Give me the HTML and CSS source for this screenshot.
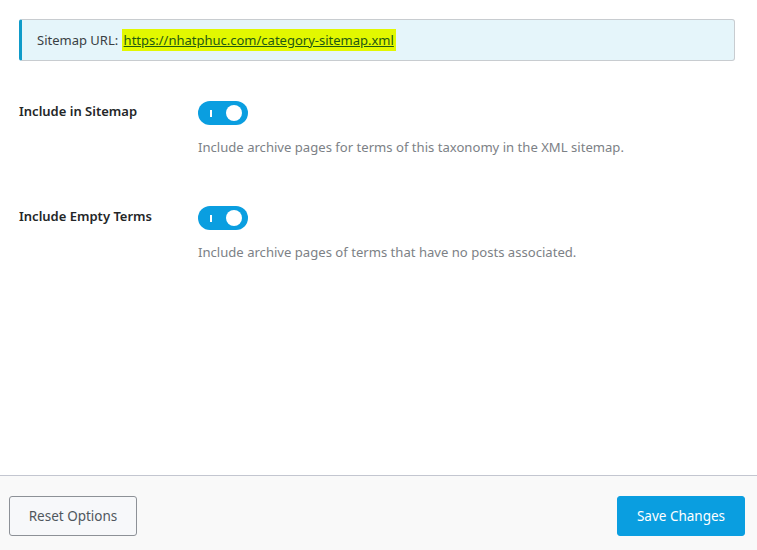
FILE: index.html
```html
<!DOCTYPE html>
<html lang="en">
<head>
    <meta charset="UTF-8">
    <meta name="viewport" content="width=device-width, initial-scale=1.0">
    <title>Sitemap Settings</title>
    <link rel="stylesheet" href="styles.css">
</head>
<body>
    <div class="content">
        <!-- Sitemap URL notice -->
        <div class="notice">Sitemap URL: <a href="#" class="mark">https://nhatphuc.com/category-sitemap.xml</a></div>

        <!-- Options -->
        <div class="field">
            <div class="field-label">Include in Sitemap</div>
            <div class="field-body">
                <span class="toggle"><span class="toggle-bar"></span><span class="toggle-knob"></span></span>
                <p class="field-desc">Include archive pages for terms of this taxonomy in the XML sitemap.</p>
            </div>
        </div>

        <div class="field">
            <div class="field-label">Include Empty Terms</div>
            <div class="field-body">
                <span class="toggle"><span class="toggle-bar"></span><span class="toggle-knob"></span></span>
                <p class="field-desc">Include archive pages of terms that have no posts associated.</p>
            </div>
        </div>
    </div>

    <div class="footer">
        <button class="btn btn-reset">Reset Options</button>
        <button class="btn btn-save">Save Changes</button>
    </div>
</body>
</html>
```

FILE: styles.css
```css
body {
    font-family: "Noto Sans", "Open Sans", sans-serif;
    font-size: 13px;
    margin: 0;
    color: #242628;
    background: #fff;
}
.content {
    height: 475px;
    padding: 19px 22px 0 19px;
    box-sizing: border-box;
}
.notice {
    height: 42px;
    line-height: 40px;
    box-sizing: border-box;
    padding-left: 15px;
    background-color: #e5f5fa;
    border: 1px solid #c8ccd0;
    border-left: 3px solid #0f9bc9;
    border-radius: 3px;
    color: #3a3f44;
    font-size: 13px;
}
.mark {
    background-color: #e2f800;
    color: #1f5a12;
    padding: 2px 2px;
}
.field {
    display: flex;
    margin-top: 40px;
}
.field + .field {
    margin-top: 50px;
}
.field-label {
    width: 179px;
    font-weight: 600;
    font-size: 13px;
    padding-top: 1px;
}
.field-body {
    flex: 1;
}
.toggle {
    position: relative;
    display: block;
    width: 50px;
    height: 24px;
    border-radius: 12px;
    background-color: #0a9ee0;
}
.toggle-bar {
    position: absolute;
    left: 12px;
    top: 9px;
    width: 2px;
    height: 7px;
    background: #fff;
}
.toggle-knob {
    position: absolute;
    right: 6px;
    top: 4px;
    width: 16px;
    height: 16px;
    border-radius: 50%;
    background: #fff;
}
.field-desc {
    margin: 13px 0 0;
    color: #7c8186;
    font-size: 13.1px;
}
.footer {
    height: 75px;
    box-sizing: border-box;
    border-top: 1px solid #c3c6d0;
    background-color: #f9f9f9;
    display: flex;
    justify-content: space-between;
    align-items: flex-start;
    padding: 20px 12px 0 9px;
}
.btn {
    width: 128px;
    height: 40px;
    font-family: inherit;
    font-size: 13.5px;
    border-radius: 3px;
    cursor: pointer;
}
.btn-reset {
    background: #f7f8fa;
    border: 1px solid #8d9197;
    color: #50575e;
}
.btn-save {
    background: #0a9ee0;
    border: 1px solid #0a9ee0;
    color: #fff;
}
```
